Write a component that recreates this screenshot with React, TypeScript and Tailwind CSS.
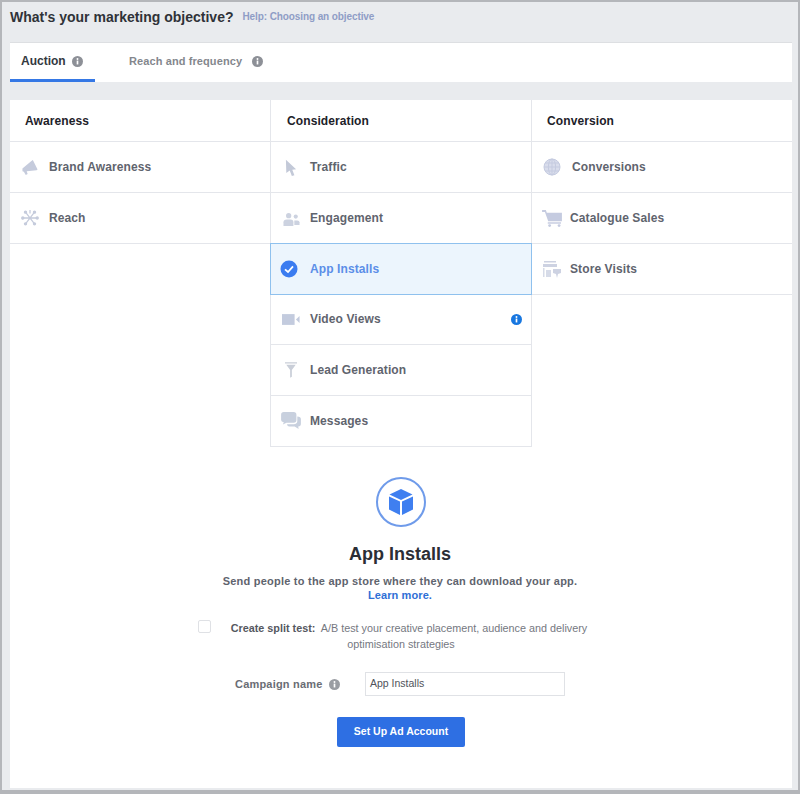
import React from "react";

const Info = ({ className = "" }: { className?: string }) => (
  <svg viewBox="0 0 12 12" className={className}>
    <circle cx="6" cy="6" r="6" fill="currentColor" />
    <rect x="5.1" y="5" width="1.8" height="4.2" fill="#fff" />
    <circle cx="6" cy="3.3" r="1.05" fill="#fff" />
  </svg>
);

const ic = "#c5cbdc";
const Megaphone = () => (
  <svg viewBox="0 0 18 18" className="w-[18px] h-[17px]"><path d="M1 10 L10.5 2 L12 1 L17 11 L16 12 L5.5 13 L6.5 16 L4.5 17 L2.5 13.5 L1 13 Z" fill={ic} /></svg>
);
const ReachIcon = () => (
  <svg viewBox="0 0 20 20" className="w-[20px] h-[18px]" stroke={ic} strokeWidth="1.4" fill={ic}>
    <path d="M2 10H18M5 3.5L15 16.5M15 3.5L5 16.5M10 1V5" fill="none" />
    <circle cx="2" cy="10" r="1.2" /><circle cx="18" cy="10" r="1.2" /><circle cx="5" cy="3.5" r="1.2" /><circle cx="15" cy="3.5" r="1.2" /><circle cx="5" cy="16.5" r="1.2" /><circle cx="15" cy="16.5" r="1.2" />
  </svg>
);
const Cursor = () => (
  <svg viewBox="0 0 14 20" className="w-[12px] h-[17px]"><path d="M1 1 L13 12 L8.5 12.5 L11 19 L8 20 L5.5 13.5 L1.5 16.5 Z" fill="#c3c9d8" /></svg>
);
const People = () => (
  <svg viewBox="0 0 18 18" className="w-[17px] h-[17px]" fill="#ccd2e0">
    <circle cx="6" cy="6" r="2.8" /><circle cx="13.5" cy="7" r="2.2" />
    <path d="M0.5 17 V13 Q0.5 10 4 10 H8 Q11 10 11 13 V17 Z" /><path d="M12 11 H15 Q17.5 11 17.5 13 V16 H12 Z" />
  </svg>
);
const Check = () => (
  <svg viewBox="0 0 18 18" className="w-[18px] h-[18px]">
    <circle cx="9" cy="9" r="8.5" fill="#3b7cf0" />
    <path d="M5 9.4 L8 12 L13 6.4" fill="none" stroke="#fff" strokeWidth="1.8" />
  </svg>
);
const Video = () => (
  <svg viewBox="0 0 20 12" className="w-[18px] h-[11px]" fill="#c3cbde"><rect x="0" y="0" width="14" height="12" /><path d="M15.5 6 L19.5 2 V10 Z" /></svg>
);
const Funnel = () => (
  <svg viewBox="0 0 14 18" className="w-[12px] h-[16px]" fill="#c9ced8"><path d="M0 0 H14 V1.5 H0 Z M1.5 3 H12.5 L8 9 V17 L6 18 V9 Z" /></svg>
);
const Chat = () => (
  <svg viewBox="0 0 22 20" className="w-[20px] h-[18px]" fill="#c8d0de">
    <path d="M3 0 H14 Q17 0 17 3 V9 Q17 12 14 12 H6 L2 14 L3 11.5 Q0 11 0 9 V3 Q0 0 3 0 Z" />
    <path d="M18 5 Q22 5 22 8 V13 Q22 16 19 16 L19.5 19 L15 16 H9 Q7 16 6.5 13.5 H14 Q18 13.5 18 10 Z" />
  </svg>
);
const Globe = () => (
  <svg viewBox="0 0 18 18" className="w-[18px] h-[18px]" fill="none" stroke="#c5cbe0" strokeWidth="1">
    <circle cx="9" cy="9" r="8" fill="#d9ddec" /><ellipse cx="9" cy="9" rx="3.6" ry="8" /><path d="M1 9H17M2 5H16M2 13H16M9 1V17" />
  </svg>
);
const Cart = () => (
  <svg viewBox="0 0 21 18" className="w-[20px] h-[17px]" fill="#c5cbe0">
    <path d="M0 0 H4 L5 3 H21 V12 H6.5 L3 2 H0 Z" /><rect x="6" y="13" width="14" height="1.5" /><circle cx="8" cy="16.5" r="1.5" /><circle cx="18" cy="16.5" r="1.5" />
  </svg>
);
const Store = () => (
  <svg viewBox="0 0 18 17" className="w-[18px] h-[17px]" fill="#cdd2e2">
    <rect x="1" y="0" width="12" height="1.5" /><rect x="0" y="3" width="14" height="3" /><path d="M0 7 H1.5 V16 H0 Z M3 9 H8 V16 H3 Z" fill="#d6dbe8" />
    <path d="M10 8 H18 V12 L15 13 L14 17 L13 13 L10 12 Z" />
  </svg>
);
const Cube = () => (
  <svg viewBox="0 0 24 26" className="w-[24px] h-[26px]" fill="#3f7ff0">
    <path d="M12 0 L23.5 5.5 L12 11 L0.5 5.5 Z" /><path d="M0 7.5 L11 12.5 V26 L0 20.5 Z" /><path d="M24 7.5 L13 12.5 V26 L24 20.5 Z" />
  </svg>
);

type Item = { label: string; icon: React.ReactNode; gap: string; selected?: boolean; note?: boolean };

const Row = ({ label, icon, gap, selected, note }: Item) => (
  <div className={`flex items-center ${selected ? "h-[52px] pl-[6px] pr-[10px] bg-[#ecf5fd] border border-[#8fc1ee] -mt-px -mb-px -mx-px relative" : "h-[51px] pl-[8px] pr-[9px] border-b border-[#e4e6eb]"}`}>
    <div className={`w-[24px] flex justify-center shrink-0 ${gap}`}>{icon}</div>
    <span className={`text-[12px] font-bold tracking-[0.1px] ${selected ? "text-[#5b8ee8]" : "text-[#5f646e]"}`}>{label}</span>
    {note && <Info className="w-[11px] h-[11px] ml-auto text-[#1877e0]" />}
  </div>
);

const Column = ({ title, items, className, titlePad }: { title: string; items: Item[]; className: string; titlePad: string }) => (
  <div className={`flex flex-col shrink-0 ${className}`}>
    <div className={`h-[42px] flex items-center border-b border-[#e4e6eb] text-[12px] font-bold text-[#1d2129] tracking-[0.1px] ${titlePad}`}>{title}</div>
    {items.map((it) => <Row key={it.label} {...it} />)}
  </div>
);

export default function App() {
  return (
    <div className="w-[800px] h-[794px] bg-[#e9ebee] border-[2px] border-[#b4b6ba] border-b-[4px] pl-[8px] pr-[6px] overflow-hidden text-[#1d2129]" style={{ fontFamily: '"Liberation Sans", Arial, sans-serif' }}>
      <div className="h-[40px] flex items-start pt-[5px]">
        <h1 className="text-[14px] font-bold text-[#2f3238] leading-[20px]">What's your marketing objective?</h1>
        <a className="ml-[9px] mt-[3px] text-[10px] font-bold text-[#8f9dc6] leading-[14px] tracking-[-0.1px]">Help: Choosing an objective</a>
      </div>
      <div className="h-[40px] bg-white border-t border-[#dddfe2] flex text-[12px] font-bold">
        <div className="w-[85px] h-full border-b-[3px] border-[#3578e5] flex items-center pl-[11px] gap-[6px]">
          <span className="text-[#333840]">Auction</span>
          <Info className="w-[11px] h-[11px] text-[#8d9097]" />
        </div>
        <div className="flex items-center pl-[34px] gap-[10px] pb-[3px] text-[11px]">
          <span className="text-[#84878d] tracking-[0.1px]">Reach and frequency</span>
          <Info className="w-[11px] h-[11px] text-[#8d9097]" />
        </div>
      </div>
      <div className="mt-[18px] bg-white h-[688px] flex flex-col">
        <div className="flex">
          <Column className="w-[260px]" titlePad="pl-[15px]" title="Awareness" items={[
            { label: "Brand Awareness", icon: <Megaphone />, gap: "mr-[7px]" },
            { label: "Reach", icon: <ReachIcon />, gap: "mr-[7px]" },
          ]} />
          <Column className="w-[261px] border-l border-[#e4e6eb]" titlePad="pl-[16px]" title="Consideration" items={[
            { label: "Traffic", icon: <Cursor />, gap: "mr-[7px]" },
            { label: "Engagement", icon: <People />, gap: "mr-[7px]" },
            { label: "App Installs", icon: <Check />, gap: "mr-[9px]", selected: true },
            { label: "Video Views", icon: <Video />, gap: "mr-[7px]", note: true },
            { label: "Lead Generation", icon: <Funnel />, gap: "mr-[7px]" },
            { label: "Messages", icon: <Chat />, gap: "mr-[7px]" },
          ]} />
          <Column className="w-[261px] border-l border-[#e4e6eb]" titlePad="pl-[15px]" title="Conversion" items={[
            { label: "Conversions", icon: <Globe />, gap: "mr-[8px]" },
            { label: "Catalogue Sales", icon: <Cart />, gap: "mr-[6px]" },
            { label: "Store Visits", icon: <Store />, gap: "mr-[6px]" },
          ]} />
        </div>
        <div className="flex flex-col items-center">
          <div className="mt-[30px] w-[50px] h-[50px] rounded-full border-2 border-[#6f9bea] flex items-center justify-center">
            <Cube />
          </div>
          <h2 className="mt-[15px] -ml-[2px] text-[18px] font-bold leading-[24px] text-[#2b2e35]">App Installs</h2>
          <p className="mt-[8px] -ml-[2px] text-[11px] font-bold text-[#5f646e] leading-[14px] tracking-[0.23px] whitespace-nowrap">Send people to the app store where they can download your app.</p>
          <a className="-ml-[2px] text-[11px] font-bold text-[#2f6fd6] leading-[14px] tracking-[0.1px]">Learn more.</a>
          <div className="mt-[18px] flex w-[396px] -ml-[10px]">
            <div className="w-[13px] h-[13px] bg-white border border-[#dfe1e5] rounded-[2px] shrink-0" />
            <p className="ml-[19px] text-center text-[10.8px] leading-[16px] text-[#75787f] w-[358px] whitespace-nowrap">
              <span className="block"><b className="text-[#55585f]">Create split test:</b>&nbsp; A/B test your creative placement, audience and delivery</span>
              <span className="block pr-[16px]">optimisation strategies</span>
            </p>
          </div>
          <div className="mt-[20px] flex items-center w-[330px] -ml-[2px]">
            <span className="text-[11px] font-bold text-[#6a6d74] tracking-[0.2px] w-[88px] whitespace-nowrap">Campaign name</span>
            <Info className="w-[11px] h-[11px] ml-[6px] text-[#9a9da3] shrink-0" />
            <div className="ml-[25px] w-[200px] h-[24px] shrink-0 border border-[#e0e2e6] flex items-center pl-[4px] text-[10.5px] text-[#50535a]">App Installs</div>
          </div>
          <button className="mt-[21px] w-[128px] h-[30px] bg-[#2e6fe3] rounded-[2px] text-white text-[10.5px] font-bold">Set Up Ad Account</button>
        </div>
      </div>
    </div>
  );
}
